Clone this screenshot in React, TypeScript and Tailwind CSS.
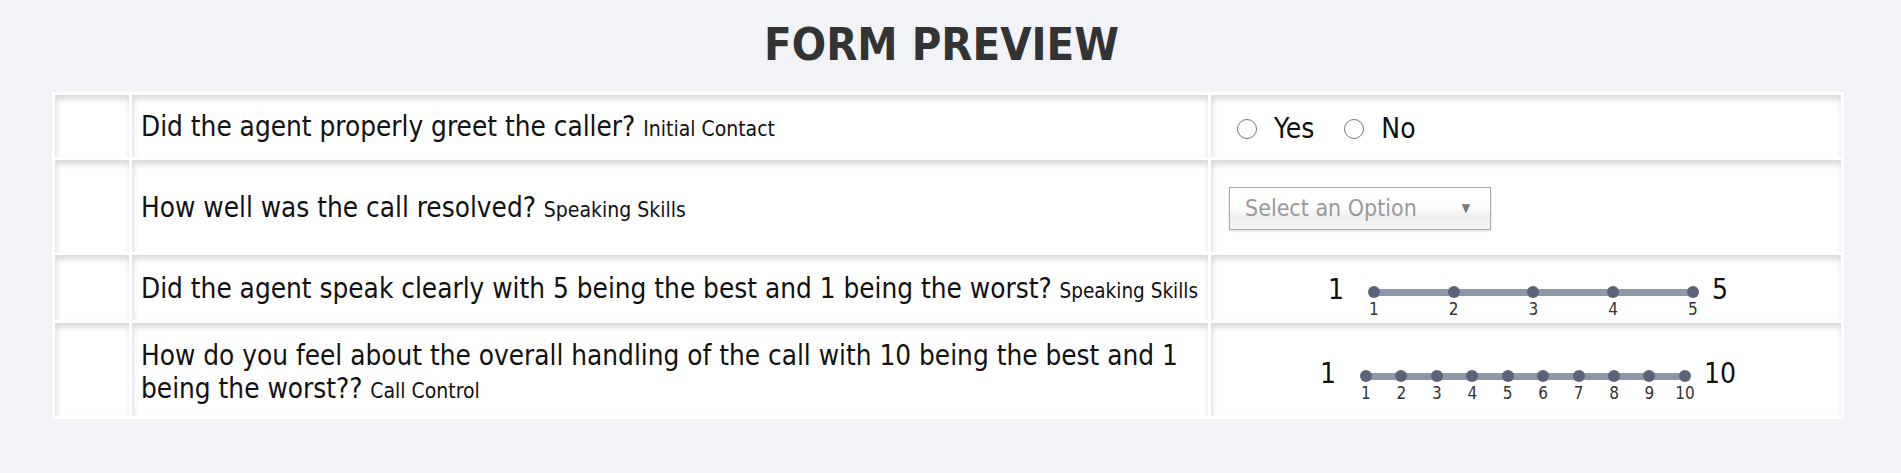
import React from "react";

const cell = "bg-white shadow-[inset_1px_4px_6px_rgba(0,0,0,0.16)] p-0";

function Radio({ label }: { label: string }) {
  return (
    <span className="inline-flex items-center">
      <span className="inline-block w-[20px] h-[20px] rounded-full border-[1.5px] border-[#777] bg-white" />
      <span className="ml-[17px] text-[28px] leading-[30px] text-[#111]">{label}</span>
    </span>
  );
}

function Scale({ n, top }: { n: number; top: number }) {
  const items = Array.from({ length: n }, (_, i) => i + 1);
  return (
    <div className="flex justify-center" style={{ paddingTop: top }}>
      <div className="flex items-start">
        <span className="text-[28px] leading-[22px] -mt-[7px] text-[#111] w-[20px] text-right mr-[24px]">1</span>
        <div className="relative w-[331px]">
          <div className="absolute left-[5px] right-[5px] top-[3px] h-[7px] bg-[#8e97a9]" />
          <div className="relative flex justify-between">
            {items.map((i) => (
              <div key={i} className="flex flex-col items-center w-[12px]">
                <span className="block w-[12px] h-[12px] rounded-full bg-[#5a6379]" />
                <span className="text-[17px] leading-[20px] text-[#333] mt-[1px] whitespace-nowrap">{i}</span>
              </div>
            ))}
          </div>
        </div>
        <span className="text-[28px] leading-[22px] -mt-[7px] text-[#111] ml-[13px]">{n}</span>
      </div>
    </div>
  );
}

export default function App() {
  return (
    <div className="min-h-[473px] bg-[#f2f3f7] font-['DejaVu_Sans',sans-serif] font-stretch-condensed text-[#111]">
      <h1 className="text-center font-bold text-[#333] text-[45px] leading-[56px] pt-[17px] pb-[19px] pr-[18px]">
        FORM PREVIEW
      </h1>
      <table className="ml-[52px] w-[1792px] table-fixed border-separate border-spacing-[3px] bg-white">
        <colgroup>
          <col className="w-[74px]" />
          <col className="w-[1076px]" />
          <col className="w-[630px]" />
        </colgroup>
        <tbody>
          <tr className="h-[62px]">
            <td className={cell} />
            <td className={`${cell} pl-[9px] pt-[5px] align-middle`}>
              <span className="text-[27.7px] leading-[32px]">Did the agent properly greet the caller? </span>
              <span className="text-[21px]">Initial Contact</span>
            </td>
            <td className={`${cell} align-middle pl-[26px]`}>
              <div className="flex items-center gap-[30px] pt-[6px]">
                <Radio label="Yes" />
                <Radio label="No" />
              </div>
            </td>
          </tr>
          <tr className="h-[92px]">
            <td className={cell} />
            <td className={`${cell} pl-[9px] pt-[6px] align-middle`}>
              <span className="text-[27.7px] leading-[32px]">How well was the call resolved? </span>
              <span className="text-[21px]">Speaking Skills</span>
            </td>
            <td className={`${cell} align-middle pl-[18px]`}>
              <div className="mt-[4px] w-[262px] h-[43px] border border-[#aaa] bg-[linear-gradient(to_bottom,#ffffff_0%,#ffffff_45%,#eeeeee_70%,#f6f6f6_100%)] shadow-[0_1px_2px_rgba(0,0,0,0.15)] flex items-center justify-between pl-[15px] pr-[20px]">
                <span className="text-[23px] text-[#999]">Select an Option</span>
                <span className="text-[12px] text-[#777]">▼</span>
              </div>
            </td>
          </tr>
          <tr className="h-[65px]">
            <td className={cell} />
            <td className={`${cell} pl-[9px] pt-[5px] align-middle whitespace-nowrap`}>
              <span className="text-[27.7px] leading-[32px]">Did the agent speak clearly with 5 being the best and 1 being the worst? </span>
              <span className="text-[20.5px]">Speaking Skills</span>
            </td>
            <td className={`${cell} align-top`}>
              <Scale n={5} top={31} />
            </td>
          </tr>
          <tr className="h-[93px]">
            <td className={cell} />
            <td className={`${cell} pl-[9px] pr-[9px] pt-[7px] align-middle`}>
              <div className="text-[27.7px] leading-[33px]">
                How do you feel about the overall handling of the call with 10 being the best and 1 being the worst??{" "}
                <span className="text-[21px]">Call Control</span>
              </div>
            </td>
            <td className={`${cell} align-top`}>
              <Scale n={10} top={47} />
            </td>
          </tr>
        </tbody>
      </table>
    </div>
  );
}
